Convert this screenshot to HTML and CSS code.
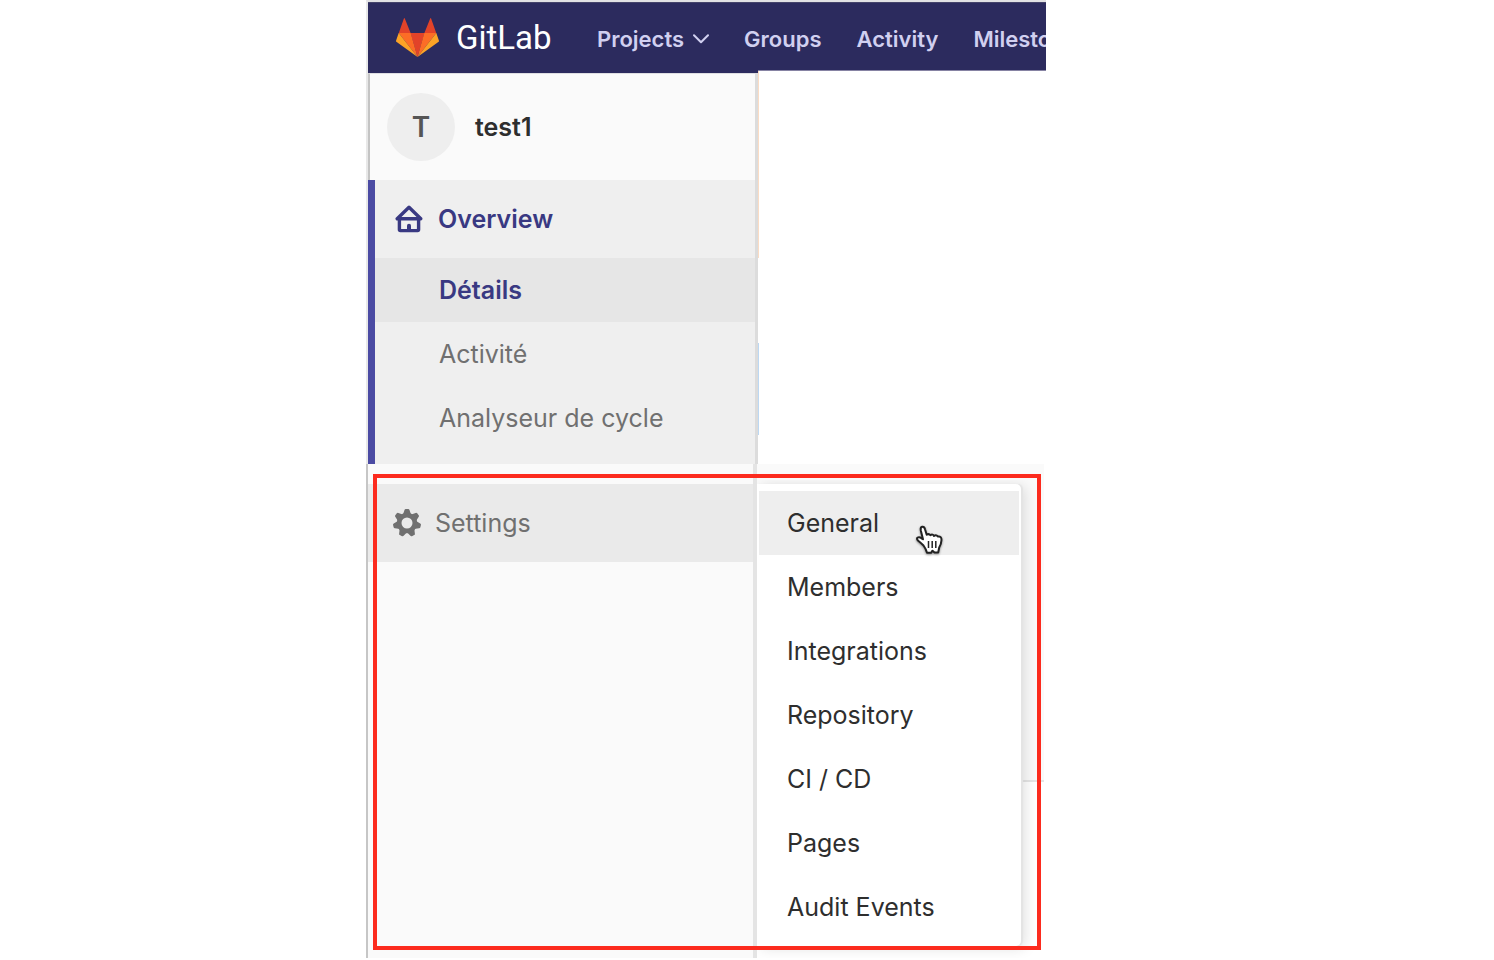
FILE: index.html
```html
<!DOCTYPE html>
<html lang="fr">
<head>
<meta charset="utf-8">
<title>test1 · GitLab</title>
<link rel="stylesheet" href="styles.css">
</head>
<body>
<div class="stage">
  <main class="app">
    <section class="upper">
      <header class="topbar">
        <a class="brand" href="#">
          <svg class="logo" viewBox="0 0 43 39" aria-hidden="true">
            <path fill="#e24329" d="M2.7 15.2 7.9.4Q8.3-.4 8.8.4L14.7 15.2ZM40.3 15.2 35.1.4Q34.7-.4 34.2.4L28.3 15.2ZM14.5 15h14L21.5 39Z"/>
            <path fill="#fc6d26" d="M2.7 15h12l6.8 24ZM40.3 15h-12l-6.8 24Z"/>
            <path fill="#fca326" d="M2.7 15 .1 22.4q-.3 1 .6 1.7L21.5 39ZM40.3 15l2.6 7.4q.3 1-.6 1.7L21.5 39Z"/>
          </svg>
          <span class="wordmark">GitLab</span>
        </a>
        <nav class="topnav">
          <a href="#">Projects
            <svg class="caret" viewBox="0 0 16 10" aria-hidden="true"><path d="M1 1.2 8 8.2 15 1.2" fill="none" stroke="currentColor" stroke-width="2" stroke-linecap="round" stroke-linejoin="round"/></svg></a>
          <a href="#">Groups</a>
          <a href="#">Activity</a>
          <a href="#">Milestones</a>
        </nav>
      </header>
      <div class="columns">
        <aside class="sidebar">
          <div class="sidebar-body">
            <a class="project" href="#"><span class="avatar">T</span><span>test1</span></a>
            <nav class="section">
              <a class="section-title" href="#">
                <svg class="home" viewBox="0 0 28 28" aria-hidden="true"><g fill="none" stroke="currentColor" stroke-width="3.400" stroke-linejoin="round" stroke-linecap="round"><path d="M14 2.300 2.200 13.700H25.800Z"/><path d="M4.400 14v10.600q0 1 1 1h17.200q1 0 1-1V14"/></g><path fill="currentColor" d="M12 26v-5.500q0-1.700 2-1.700t2 1.700V26Z"/></svg>
                <span>Overview</span>
              </a>
              <a class="sub current" href="#">Détails</a>
              <a class="sub" href="#">Activité</a>
              <a class="sub" href="#">Analyseur de cycle</a>
            </nav>
          </div>
        </aside>
        <div class="content"></div>
      </div>
    </section>
    <section class="lower">
      <aside class="sidebar-low">
        <a class="settings" href="#">
          <svg class="gear" viewBox="-14 -14 28 28" aria-hidden="true">
            <defs><path id="tooth" d="M-4.200-8-2.500-13Q-2.200-14-1.200-14H1.200Q2.200-14 2.500-13L4.200-8Z"/></defs>
            <g fill="currentColor"><use href="#tooth"/><use href="#tooth" transform="rotate(51.430)"/><use href="#tooth" transform="rotate(102.860)"/><use href="#tooth" transform="rotate(154.290)"/><use href="#tooth" transform="rotate(205.710)"/><use href="#tooth" transform="rotate(257.140)"/><use href="#tooth" transform="rotate(308.570)"/></g>
            <circle r="7.900" fill="none" stroke="currentColor" stroke-width="4.800"/>
          </svg>
          <span>Settings</span>
        </a>
      </aside>
      <div class="flyout-area">
        <nav class="flyout">
          <a class="hover" href="#">General</a>
          <a href="#">Members</a>
          <a href="#">Integrations</a>
          <a href="#">Repository</a>
          <a href="#">CI / CD</a>
          <a href="#">Pages</a>
          <a href="#">Audit Events</a>
        </nav>
      </div>
      <div class="highlight"></div>
      <svg class="pointer" viewBox="0 0 28 30" aria-hidden="true"><path fill="#fff" stroke="#222" stroke-width="2" stroke-linejoin="round" d="M8.500 20.500Q6 18 3.500 16 1 13.500 2.600 12.600 4.400 11.700 6.500 13.300L8 14.200 5.800 5.500Q5.200 2.200 7.200 1.700 9.300 1.300 10 4.200L11.700 9.800Q13.800 8.200 15.400 10.200 17.700 8.700 19 10.900 21.200 9.500 23 11.500 26.600 11 26.500 15 26.300 19 24.200 22.500L23.200 27.500H19.500L17.500 25.700 16 27.800H12Q11 24 8.500 20.500Z"/><path stroke="#222" stroke-width="1.500" d="M13.500 16v7M17.200 16v7M20.800 16v7"/></svg>
    </section>
  </main>
</div>
</body>
</html>
```
FILE: styles.css
```css
* { box-sizing: border-box; }
body {
  margin: 0;
  background: #fff;
  font-family: Inter, "Liberation Sans", sans-serif;
  font-size: 25px;
  line-height: 32px;
}
a { color: inherit; text-decoration: none; }
svg { display: block; flex: none; }

.stage {
  display: grid;
  grid-template-columns: 366fr 680fr 448fr;
}
.app { grid-column: 2; min-width: 0; }

.upper {
  border-top: 2px solid #e2e2e4;
  border-left: 2px solid #e8e8e8;
}
.topbar {
  display: flex;
  align-items: center;
  gap: 49px;
  height: 68px;
  padding: 2px 0 0 28px;
  overflow: hidden;
  background: #2c2b5e;
  border-top: 1px solid #45446b;
}
.brand { display: flex; align-items: center; gap: 17px; color: #fff; }
.logo { width: 43px; height: 39px; }
.wordmark {
  width: 92px;
  font-family: Roboto, "Noto Sans", sans-serif;
  font-size: 33px;
  line-height: 40px;
}
.topnav {
  display: flex;
  gap: 35px;
  padding-top: 2px;
  color: #d1d0f0;
  font-size: 22px;
  font-weight: 600;
  white-space: nowrap;
}
.topnav a { display: flex; align-items: center; gap: 9px; }
.caret { width: 16px; height: 10px; }

.columns { display: grid; grid-template-columns: 390px minmax(0, 1fr); }
.sidebar { border-top: 3px solid #2c2b5e; }
.sidebar-body { border-right: 3px solid #dcdcdc; }
.project {
  display: flex;
  align-items: center;
  gap: 20px;
  height: 107px;
  padding: 0 0 1px 17px;
  background: #fafafa;
  border-top: 1px solid #dedee2;
  border-left: 2px solid #c4c4c4;
  color: #2e2e2e;
  font-weight: 600;
}
.avatar {
  display: grid;
  place-items: center;
  width: 68px;
  height: 68px;
  border-radius: 50%;
  background: #eee;
  color: #555;
  font-size: 28px;
}
.section {
  padding-bottom: 14px;
  background: #efefef;
  border-left: 7px solid #4b4ba3;
  color: #707070;
}
.section-title {
  display: flex;
  align-items: center;
  gap: 15px;
  height: 78px;
  padding-left: 20px;
  color: #393982;
  font-weight: 600;
}
.home { width: 28px; height: 28px; }
.sub { display: block; padding: 16px 0 16px 64px; }
.current { background: #e6e6e6; color: #393982; font-weight: 600; }
.content {
  border-top: 1px solid #8683a3;
  background:
    linear-gradient(#fbdcc4, #fbdcc4) 0 0 / 1px 187px no-repeat,
    linear-gradient(#bcd8f3, #bcd8f3) 0 272px / 1px 92px no-repeat;
}

.lower {
  position: relative;
  display: grid;
  grid-template-columns: 391px minmax(0, 1fr);
  min-height: 494px;
}
.sidebar-low {
  padding-top: 20px;
  background: #fafafa;
  border-left: 2px solid #c6c6c6;
  border-right: 4px solid #e4e4e4;
}
.settings {
  display: flex;
  align-items: center;
  gap: 14px;
  height: 78px;
  padding-left: 25px;
  background: #eaeaea;
  color: #707070;
}
.gear { width: 28px; height: 28px; }
.flyout-area {
  padding: 20px 23px 12px 0;
  margin-right: 2px;
  background: linear-gradient(#fafafa 316px, #e5e5e5 316px, #e5e5e5 318px, #fff 318px);
}
.flyout {
  padding: 7px 2px;
  background: #fff;
  border-radius: 0 5px 5px 0;
  box-shadow: 2px 0 1px #e4e4e4, 4px 2px 14px rgba(0, 0, 0, 0.13);
  clip-path: inset(-4px -20px -12px 0);
  color: #2e2e2e;
}
.flyout a { display: block; padding: 16px 28px; }
.flyout .hover { background: #eee; }
.highlight {
  position: absolute;
  inset: 10px 5px 8px 7px;
  border: 4px solid #fc2b1e;
  pointer-events: none;
}
.pointer {
  position: absolute;
  top: 61px;
  left: 549px;
  width: 28px;
  height: 30px;
  filter: drop-shadow(0 1px 1px rgba(0, 0, 0, 0.4));
}
```
